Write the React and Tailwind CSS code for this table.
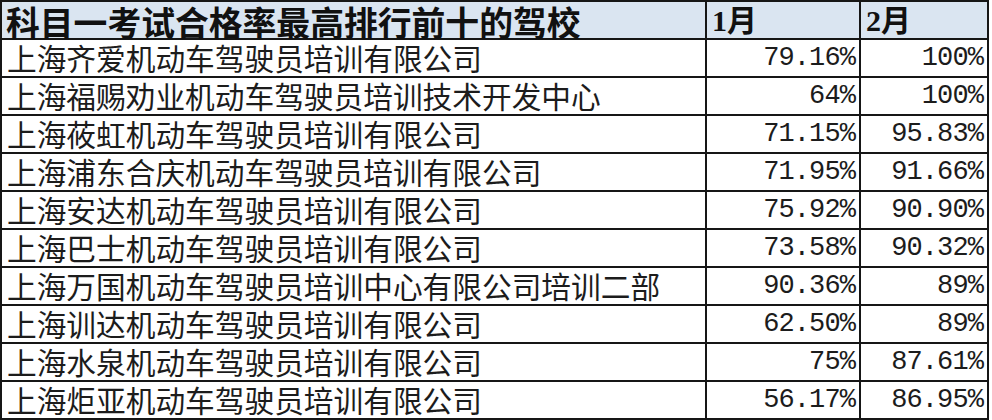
const rows = [
  ['上海齐爱机动车驾驶员培训有限公司', '79.16%', '100%'],
  ['上海福赐劝业机动车驾驶员培训技术开发中心', '64%', '100%'],
  ['上海莜虹机动车驾驶员培训有限公司', '71.15%', '95.83%'],
  ['上海浦东合庆机动车驾驶员培训有限公司', '71.95%', '91.66%'],
  ['上海安达机动车驾驶员培训有限公司', '75.92%', '90.90%'],
  ['上海巴士机动车驾驶员培训有限公司', '73.58%', '90.32%'],
  ['上海万国机动车驾驶员培训中心有限公司培训二部', '90.36%', '89%'],
  ['上海训达机动车驾驶员培训有限公司', '62.50%', '89%'],
  ['上海水泉机动车驾驶员培训有限公司', '75%', '87.61%'],
  ['上海炬亚机动车驾驶员培训有限公司', '56.17%', '86.95%'],
];

const cell = 'h-[38px] border-r-2 border-b-2 border-[#161616] flex items-center whitespace-nowrap';
const head = cell + ' bg-[#dae5f1] font-bold text-[#111]';
const name = cell + ' bg-white pl-[5px] text-[29.7px] leading-[34px] text-[#1c1c1c] font-["Noto_Sans_CJK_SC",sans-serif]';
const num = cell + ' bg-white justify-end pr-[4px] text-[27px] leading-[30px] tracking-[-0.9px] text-[#1c1c1c] font-["Liberation_Mono",monospace]';

export default function App() {
  return (
    <div className="w-[992px] h-[420px] bg-white overflow-hidden">
      <div className="grid grid-cols-[705px_154px_128px] w-fit border-l-2 border-t-2 border-[#161616]">
        <div className={head + ' pl-[4px] pt-[3px] text-[33.8px] leading-[34px] font-["Noto_Sans_CJK_SC",sans-serif]'}>
          科目一考试合格率最高排行前十的驾校
        </div>
        <div className={head + ' pl-[5px] pt-[2px] text-[30px] leading-[34px] font-["Liberation_Serif","Noto_Sans_CJK_SC",serif]'}>1月</div>
        <div className={head + ' pl-[5px] pt-[2px] text-[30px] leading-[34px] font-["Liberation_Serif","Noto_Sans_CJK_SC",serif]'}>2月</div>
        {rows.map((r) => (
          <div key={r[0]} className="contents">
            <div className={name}>{r[0]}</div>
            <div className={num}>{r[1]}</div>
            <div className={num}>{r[2]}</div>
          </div>
        ))}
      </div>
    </div>
  );
}
